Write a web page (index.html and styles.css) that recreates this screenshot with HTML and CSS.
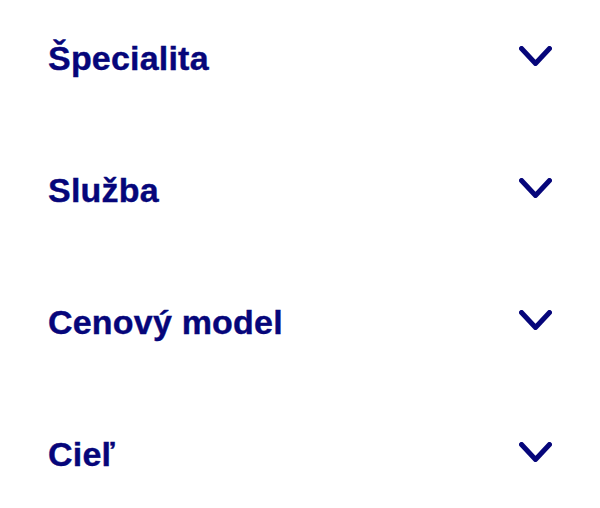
FILE: index.html
```html
<!DOCTYPE html>
<html lang="sk">
<head>
  <meta charset="UTF-8" />
  <meta name="viewport" content="width=device-width, initial-scale=1.0"/>
  <title>Filtre</title>
  <link rel="stylesheet" href="styles.css">
</head>
<body>
  <div class="filters">
    <div class="filter-row">
      <span class="filter-title">Špecialita</span>
      <svg class="chevron" viewBox="0 0 33 20"><polyline points="2.5,2.5 16.5,17.5 30.5,2.5" /></svg>
    </div>
    <div class="filter-row">
      <span class="filter-title">Služba</span>
      <svg class="chevron" viewBox="0 0 33 20"><polyline points="2.5,2.5 16.5,17.5 30.5,2.5" /></svg>
    </div>
    <div class="filter-row">
      <span class="filter-title">Cenový model</span>
      <svg class="chevron" viewBox="0 0 33 20"><polyline points="2.5,2.5 16.5,17.5 30.5,2.5" /></svg>
    </div>
    <div class="filter-row">
      <span class="filter-title">Cieľ</span>
      <svg class="chevron" viewBox="0 0 33 20"><polyline points="2.5,2.5 16.5,17.5 30.5,2.5" /></svg>
    </div>
  </div>
</body>
</html>
```

FILE: styles.css
```css
* {
  box-sizing: border-box;
}
body {
  margin: 0;
  background: #fff;
  font-family: 'Liberation Sans', Arial, sans-serif;
  color: #06067a;
}
.filters {
  display: flex;
  flex-direction: column;
  gap: 80px;
  padding: 32px 48px;
}
.filter-row {
  display: flex;
  align-items: center;
  justify-content: space-between;
  height: 52px;
}
.filter-title {
  font-size: 34px;
  font-weight: bold;
  letter-spacing: 0.2px;
  -webkit-text-stroke: 0.4px #06067a;
}
.chevron {
  width: 33px;
  height: 20px;
  margin-bottom: 5px;
  fill: none;
  stroke: #06067a;
  stroke-width: 5;
  stroke-linecap: round;
  stroke-linejoin: round;
}
```
